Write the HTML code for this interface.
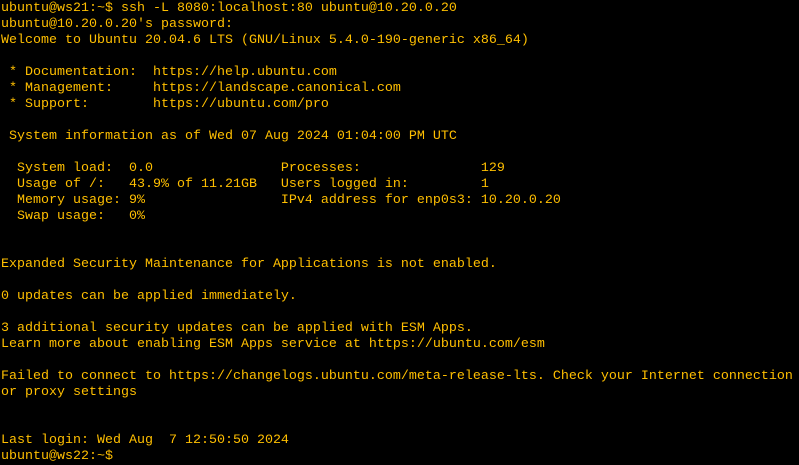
<!DOCTYPE html>
<html><head><meta charset="utf-8"><style>
html,body{margin:0;padding:0;background:#000;width:799px;height:465px;overflow:hidden}
pre{margin:0;padding:1px 0 0 1px;color:#ffbf00;font-family:"Liberation Mono",monospace;font-size:13.33px;line-height:16px;white-space:pre}
</style></head><body><pre>ubuntu@ws21:~$ ssh -L 8080:localhost:80 ubuntu@10.20.0.20
ubuntu@10.20.0.20's password:
Welcome to Ubuntu 20.04.6 LTS (GNU/Linux 5.4.0-190-generic x86_64)

 * Documentation:  https://help.ubuntu.com
 * Management:     https://landscape.canonical.com
 * Support:        https://ubuntu.com/pro

 System information as of Wed 07 Aug 2024 01:04:00 PM UTC

  System load:  0.0                Processes:               129
  Usage of /:   43.9% of 11.21GB   Users logged in:         1
  Memory usage: 9%                 IPv4 address for enp0s3: 10.20.0.20
  Swap usage:   0%


Expanded Security Maintenance for Applications is not enabled.

0 updates can be applied immediately.

3 additional security updates can be applied with ESM Apps.
Learn more about enabling ESM Apps service at https://ubuntu.com/esm

Failed to connect to https://changelogs.ubuntu.com/meta-release-lts. Check your Internet connection
or proxy settings


Last login: Wed Aug  7 12:50:50 2024
ubuntu@ws22:~$</pre></body></html>
